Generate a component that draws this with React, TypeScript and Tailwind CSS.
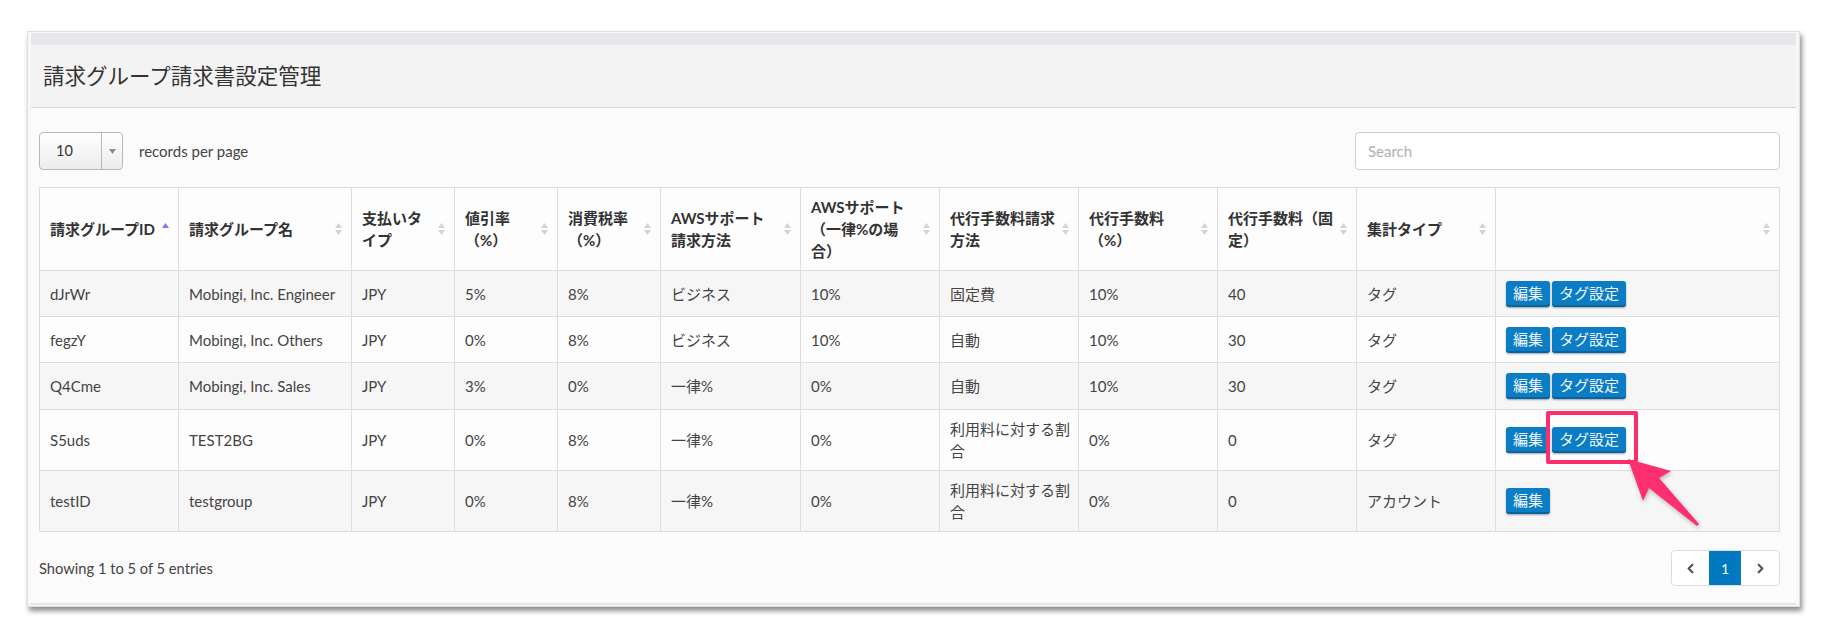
import React from 'react';
import { ChevronLeft, ChevronRight } from 'lucide-react';

const colWidths = [139, 173, 103, 103, 103, 140, 139, 139, 139, 139, 139, 284];

const headers: React.ReactNode[] = [
  '請求グループID',
  '請求グループ名',
  <>支払いタ<br />イプ</>,
  <>値引率<br />（%）</>,
  <>消費税率<br />（%）</>,
  <>AWSサポート<br />請求方法</>,
  <>AWSサポート<br />（一律%の場<br />合）</>,
  <>代行手数料請求<br />方法</>,
  <>代行手数料<br />（%）</>,
  <>代行手数料（固<br />定）</>,
  '集計タイプ',
  '',
];

type Row = {
  cells: React.ReactNode[];
  tags: boolean;
  height: string;
};

const rows: Row[] = [
  { cells: ['dJrWr', 'Mobingi, Inc. Engineer', 'JPY', '5%', '8%', 'ビジネス', '10%', '固定費', '10%', '40', 'タグ'], tags: true, height: 'h-[46px]' },
  { cells: ['fegzY', 'Mobingi, Inc. Others', 'JPY', '0%', '8%', 'ビジネス', '10%', '自動', '10%', '30', 'タグ'], tags: true, height: 'h-[46px]' },
  { cells: ['Q4Cme', 'Mobingi, Inc. Sales', 'JPY', '3%', '0%', '一律%', '0%', '自動', '10%', '30', 'タグ'], tags: true, height: 'h-[47px]' },
  { cells: ['S5uds', 'TEST2BG', 'JPY', '0%', '8%', '一律%', '0%', <>利用料に対する割<br />合</>, '0%', '0', 'タグ'], tags: true, height: 'h-[61px]' },
  { cells: ['testID', 'testgroup', 'JPY', '0%', '8%', '一律%', '0%', <>利用料に対する割<br />合</>, '0%', '0', 'アカウント'], tags: false, height: 'h-[61px]' },
];

function SortIcon({ active }: { active?: boolean }) {
  return (
    <svg
      width="7"
      height="14"
      viewBox="0 0 7 14"
      className="absolute right-[9px] top-1/2 -translate-y-1/2"
    >
      <polygon points="0,6 3.5,1 7,6" fill={active ? '#7b80e0' : '#d4d4d4'} />
      {!active && <polygon points="0,8 3.5,13 7,8" fill="#d4d4d4" />}
    </svg>
  );
}

function BlueButton({ label }: { label: string }) {
  return (
    <button className="h-[26px] rounded-[3px] bg-[#0b7dc5] px-[7px] text-[15px] leading-[24px] text-[#f2f7fb] shadow-[0_1px_2px_rgba(0,0,0,0.35)] border-b-[2px] border-[#0864a0]">
      {label}
    </button>
  );
}

export default function App() {
  return (
    <div className="relative min-h-[630px] bg-white pt-[31px] pl-[27px] font-[family-name:Lato,'Noto_Sans_CJK_JP',sans-serif] text-[#444]">
      {/* panel */}
      <div className="w-[1773px] border border-[#e0e0e0] bg-[#f7f7f7] px-[3px] pt-[1px] pb-[1px] shadow-[2px_4px_5px_rgba(0,0,0,0.45)]">
        <div className="h-[12px] bg-[#e6e7ea]" />
        <div className="flex h-[63px] items-center border-b border-[#d6d6d6] bg-[#f3f3f3] pl-[12px]">
          <h1 className="text-[21.5px] font-normal text-[#333]">請求グループ請求書設定管理</h1>
        </div>

        <div className="bg-[#fbfbfb] pl-[8px] pr-[16px] pt-[24px] pb-[17px]">
          {/* controls */}
          <div className="flex h-[38px] items-center justify-between">
            <div className="flex items-center">
              <div className="flex h-[38px] w-[84px] overflow-hidden rounded-[4px] border border-[#b8b8b8] bg-gradient-to-b from-white to-[#ececec]">
                <div className="flex flex-1 items-center pl-[16px] text-[14.5px] text-[#333]">10</div>
                <div className="flex w-[21px] items-center justify-center border-l border-[#b8b8b8]">
                  <svg width="7" height="5" viewBox="0 0 7 5">
                    <polygon points="0,0 7,0 3.5,5" fill="#8a8a8a" />
                  </svg>
                </div>
              </div>
              <span className="ml-[16px] text-[15px] text-[#444]">records per page</span>
            </div>
            <div className="flex h-[38px] w-[425px] items-center rounded-[4px] border border-[#cfcfcf] bg-white pl-[12px] text-[15px] text-[#b0b0b0]">
              Search
            </div>
          </div>

          {/* table */}
          <table className="mt-[17px] w-[1741px] table-fixed border-collapse text-[15px]">
            <colgroup>
              {colWidths.map((w, i) => (
                <col key={i} style={{ width: w }} />
              ))}
            </colgroup>
            <thead>
              <tr className="h-[83px] bg-[#fdfdfd]">
                {headers.map((h, i) => (
                  <th
                    key={i}
                    className="relative border border-[#dddddd] pl-[10px] pr-[24px] text-left align-middle text-[15px] font-bold leading-[22px] text-[#333] whitespace-nowrap"
                  >
                    {h}
                    <SortIcon active={i === 0} />
                  </th>
                ))}
              </tr>
            </thead>
            <tbody>
              {rows.map((r, ri) => (
                <tr key={ri} className={`${r.height} ${ri % 2 === 0 ? 'bg-[#f6f6f6]' : 'bg-[#fdfdfd]'}`}>
                  {r.cells.map((c, ci) => (
                    <td
                      key={ci}
                      className="border border-[#dddddd] pl-[10px] align-middle leading-[22px] whitespace-nowrap"
                    >
                      {c}
                    </td>
                  ))}
                  <td className="border border-[#dddddd] pl-[10px] align-middle">
                    <div className="flex gap-[2px]">
                      <BlueButton label="編集" />
                      {r.tags && <BlueButton label="タグ設定" />}
                    </div>
                  </td>
                </tr>
              ))}
            </tbody>
          </table>

          {/* footer */}
          <div className="mt-[18px] flex h-[36px] items-center justify-between">
            <span className="text-[14.7px] text-[#444]">Showing 1 to 5 of 5 entries</span>
            <div className="flex h-[36px] overflow-hidden rounded-[4px] border border-[#dddddd] bg-white">
              <div className="flex w-[37px] items-center justify-center text-[#555]">
                <ChevronLeft size={15} strokeWidth={3.5} />
              </div>
              <div className="flex w-[32px] items-center justify-center bg-[#0079c1] text-[14px] text-white">1</div>
              <div className="flex w-[38px] items-center justify-center text-[#555]">
                <ChevronRight size={15} strokeWidth={3.5} />
              </div>
            </div>
          </div>
        </div>
        <div className="h-[2px] bg-[#e4e6e9]" />
      </div>

      {/* annotation: highlight box */}
      <div className="absolute left-[1546px] top-[411px] h-[53px] w-[92px] rounded-[2px] border-[4px] border-[#fc2e6c]" />

      {/* annotation: arrow */}
      <svg
        className="absolute left-[1610px] top-[445px] drop-shadow-[1px_2px_2px_rgba(0,0,0,0.25)]"
        width="100"
        height="90"
        viewBox="1610 445 100 90"
      >
        <polygon
          points="1628,459 1671,471 1659,478 1699,524 1697,526 1649,488 1643,501"
          fill="#fd2f6e"
        />
      </svg>
    </div>
  );
}
